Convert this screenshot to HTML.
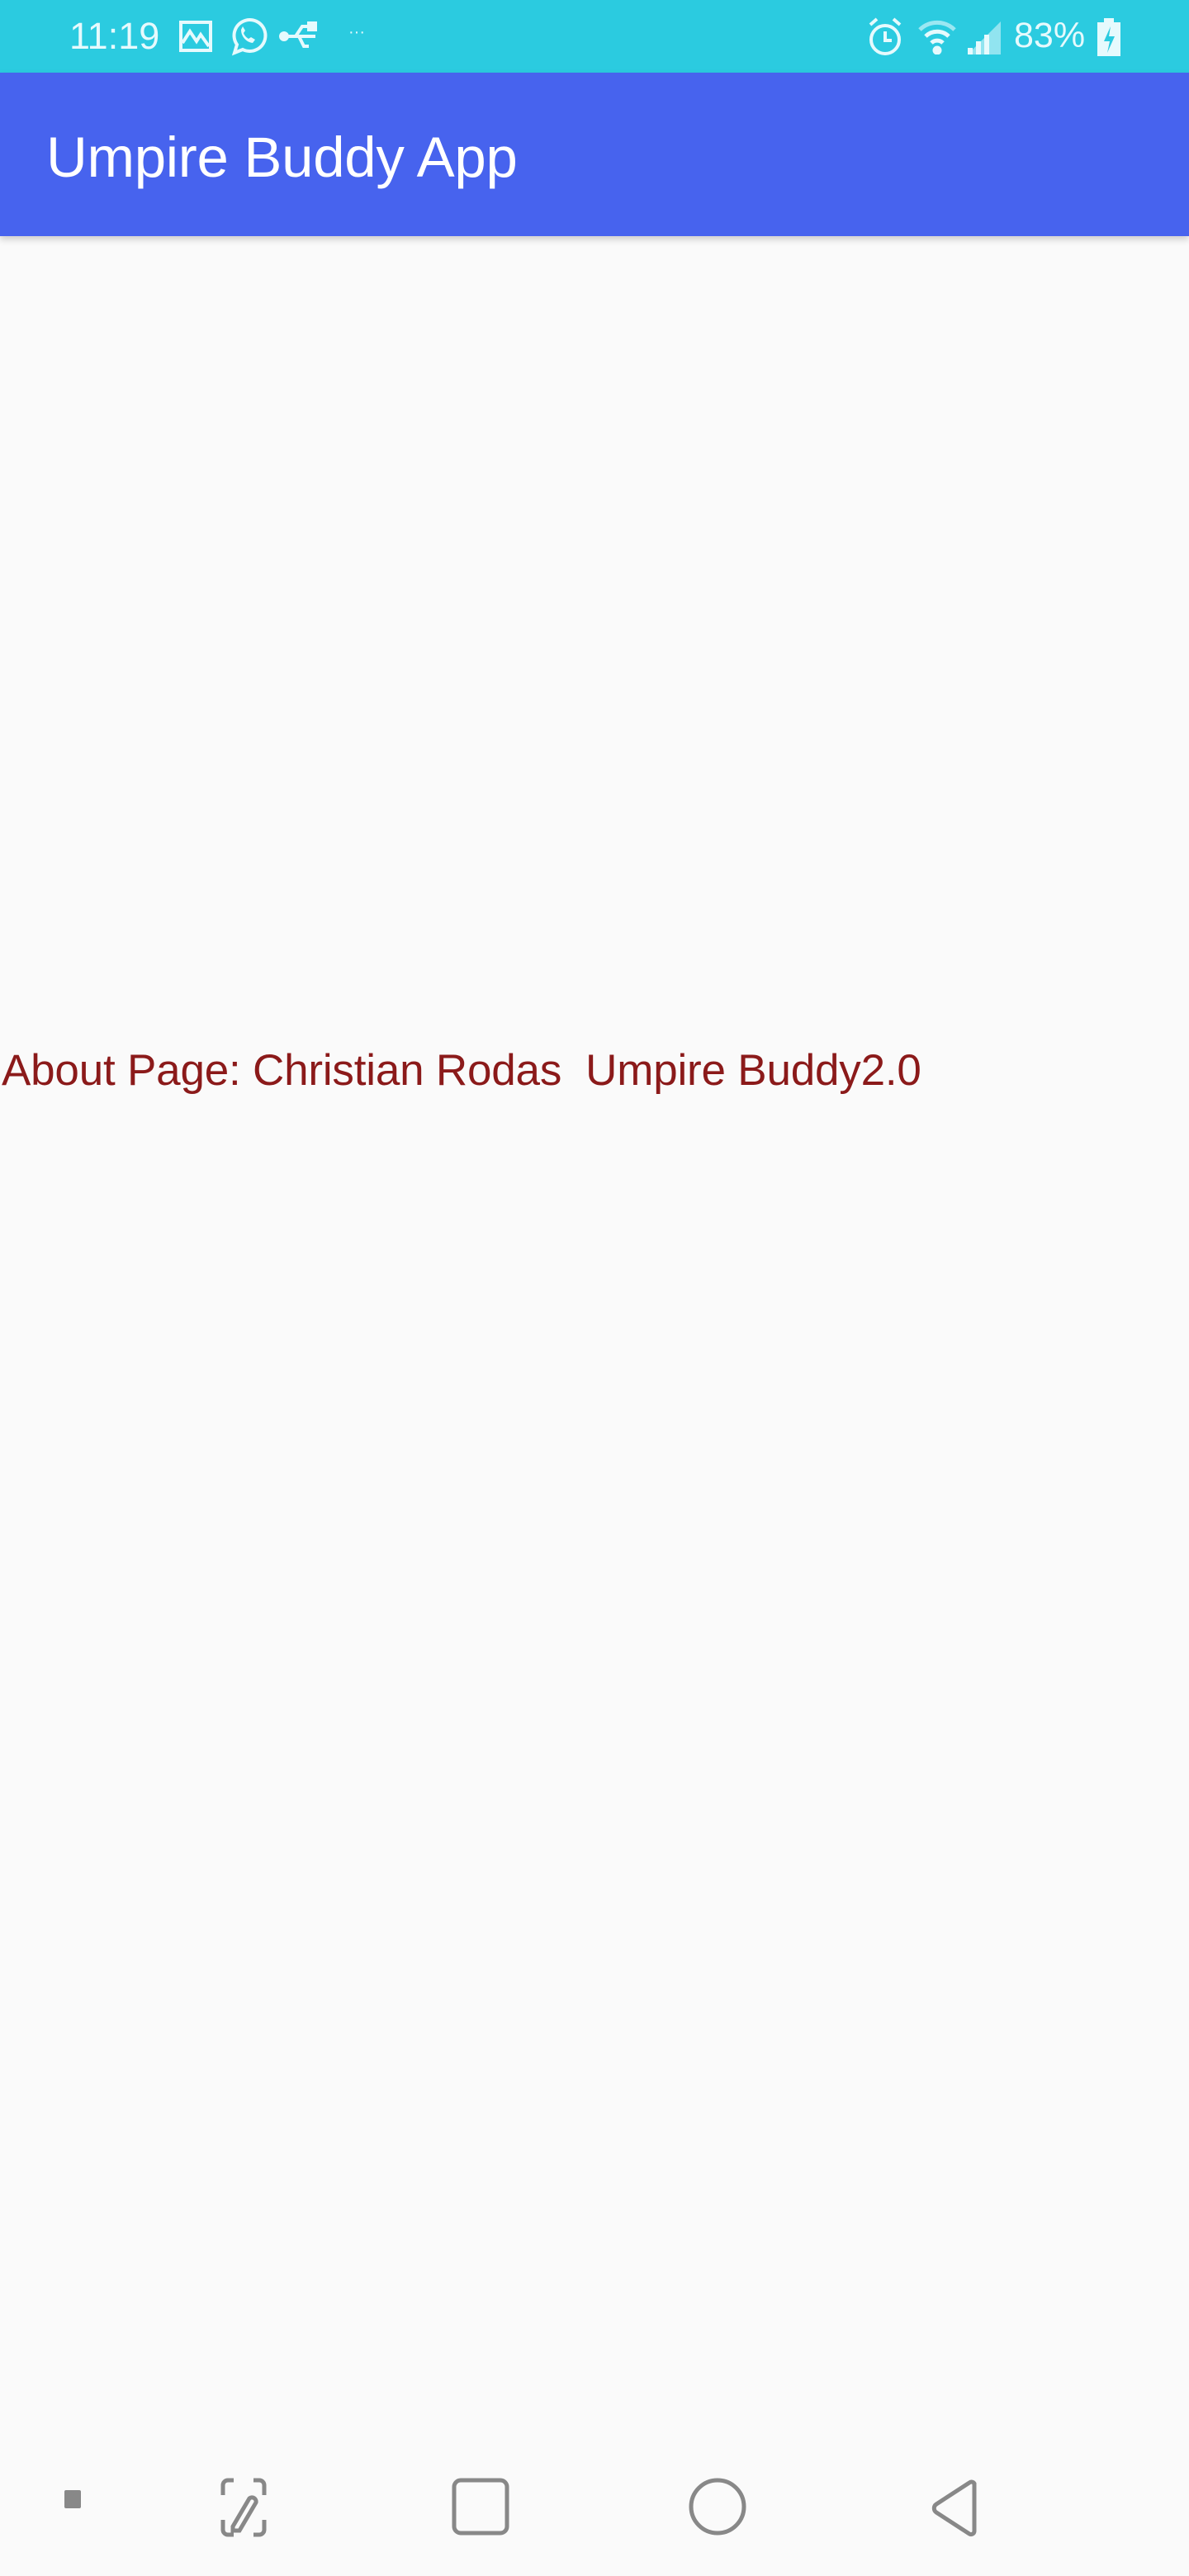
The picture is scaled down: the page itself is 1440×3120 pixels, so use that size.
<!DOCTYPE html>
<html><head><meta charset="utf-8"><style>
body{margin:0;width:1440px;height:3120px;background:#fafafa;font-family:"Liberation Sans",sans-serif;position:relative;overflow:hidden}
.sb{position:absolute;left:0;top:0;width:1440px;height:88px;background:#2bcbe0;color:#e6fafd}
.ab{position:absolute;left:0;top:88px;width:1440px;height:198px;background:#4763ee;box-shadow:0 4px 8px rgba(0,0,0,.18)}
.ab span{position:absolute;left:56px;top:63px;font-size:69px;color:#fff;letter-spacing:-0.3px;white-space:nowrap}
.t{position:absolute;left:2px;top:1266px;font-size:53px;color:#8b1a1a;letter-spacing:-0.2px;white-space:pre}
</style></head><body>
<div class="sb">
<span style="position:absolute;left:84px;top:18px;font-size:45px">11:19</span>
<svg style="position:absolute;left:216px;top:24px" width="42" height="40" viewBox="0 0 42 40" fill="none" stroke="#e6fafd" stroke-width="4"><rect x="3" y="3" width="36" height="34"/><path d="M5 28l9-14 8 12 5-8 10 14"/></svg>
<svg style="position:absolute;left:274px;top:20px" width="50" height="50" viewBox="0 0 50 50" fill="none" stroke="#e6fafd" stroke-width="4"><path d="M10 44l3-10a19 19 0 1 1 7 6z"/><path d="M18 16c0 8 6 15 14 16l3-4-5-3-3 2c-3-2-5-4-6-7l2-3-3-5z" fill="#e6fafd" stroke="none"/></svg>
<svg style="position:absolute;left:338px;top:26px" width="50" height="36" viewBox="0 0 50 36" fill="none" stroke="#e6fafd" stroke-width="4"><path d="M4 18h40M20 18l8-12h8M24 18l6 12h6"/><circle cx="6" cy="18" r="4" fill="#e6fafd"/><rect x="36" y="2" width="8" height="8" fill="#e6fafd"/></svg>
<span style="position:absolute;left:422px;top:28px;font-size:20px">···</span>
<svg style="position:absolute;left:1050px;top:20px" width="44" height="48" viewBox="0 0 44 48" fill="none" stroke="#e6fafd" stroke-width="4"><circle cx="22" cy="28" r="17"/><path d="M22 18v11h8M4 10l8-7M40 10l-8-7"/></svg>
<svg style="position:absolute;left:1110px;top:22px" width="50" height="44" viewBox="0 0 50 44" fill="none" stroke="#e6fafd" stroke-width="5"><path d="M4 14a30 30 0 0 1 42 0" opacity=".6"/><path d="M11 22a20 20 0 0 1 28 0"/><path d="M18 30a10 10 0 0 1 14 0"/><circle cx="25" cy="39" r="3" fill="#e6fafd"/></svg>
<svg style="position:absolute;left:1170px;top:22px" width="44" height="44" viewBox="0 0 44 44" fill="#e6fafd"><path d="M2 44L42 4v40z" opacity=".55"/><rect x="2" y="36" width="6" height="8"/><rect x="12" y="28" width="6" height="16"/><rect x="22" y="20" width="6" height="24"/></svg>
<span style="position:absolute;left:1228px;top:19px;font-size:43px">83%</span>
<svg style="position:absolute;left:1328px;top:22px" width="30" height="46" viewBox="0 0 30 46"><rect x="9" y="0" width="12" height="5" fill="#e6fafd"/><rect x="1" y="5" width="28" height="41" fill="#e6fafd"/><path d="M17 10l-8 18h7l-3 14 9-20h-7z" fill="#2bcbe0"/></svg>
</div>
<div class="ab"><span>Umpire Buddy App</span></div>
<div class="t">About Page: Christian Rodas  Umpire Buddy2.0</div>
<svg style="position:absolute;left:0;top:2994px" width="1440" height="120" fill="none" stroke="#888" stroke-width="5">
<rect x="78" y="22" width="20" height="22" rx="2" fill="#888" stroke="none"/>
<path d="M270 28v-12a6 6 0 0 1 6-6h7M307 10h7a6 6 0 0 1 6 6v12M320 58v12a6 6 0 0 1-6 6h-7M283 76h-7a6 6 0 0 1-6-6v-12"/>
<path d="M282 66l20-34a5 5 0 0 1 8 5l-20 34h-8z"/>
<rect x="550" y="10" width="64" height="64" rx="8"/>
<circle cx="869" cy="42" r="32"/>
<path d="M1180 14v58a4 4 0 0 1-6 3l-40-26a6 6 0 0 1 0-10l40-26a4 4 0 0 1 6 1z"/>
</svg>
</body></html>
